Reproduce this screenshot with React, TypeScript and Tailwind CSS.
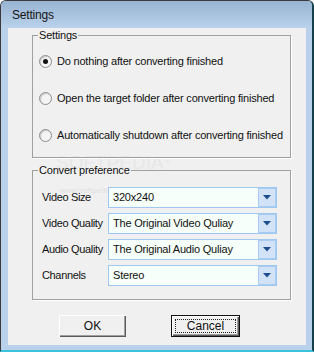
import React from "react";

const font = { fontFamily: '"Liberation Sans", Arial, sans-serif' };

function Radio({ checked, label }: { checked?: boolean; label: string }) {
  return (
    <div className="flex items-center gap-[5px] h-[16px]">
      <div className="w-[13px] h-[13px] rounded-full border border-[#8d8d8d] bg-[#f4f4f4] shadow-[inset_1px_1px_1px_#c8c8c8] flex items-center justify-center">
        {checked && <div className="w-[5px] h-[5px] rounded-full bg-[#111]" />}
      </div>
      <span className="tracking-[-0.2px] text-[#111]">{label}</span>
    </div>
  );
}

function Select({ value }: { value: string }) {
  return (
    <div className="w-[169px] h-[21px] border border-[#9fc8f0] bg-[#f6fff9] flex">
      <div className="flex-1 pl-[4px] flex items-center tracking-[-0.2px] text-[#111]">{value}</div>
      <div className="w-[18px] h-full border border-[#a9ccf2] bg-[#d2e3f8] flex items-center justify-center">
        <svg width="8" height="5" viewBox="0 0 8 5">
          <polygon points="0,0 8,0 4,4.5" fill="#1d4d8c" />
        </svg>
      </div>
    </div>
  );
}

function Row({ label, value }: { label: string; value: string }) {
  return (
    <div className="flex items-center h-[21px]">
      <div className="w-[66px] tracking-[-0.35px] text-[#111] whitespace-nowrap">{label}</div>
      <Select value={value} />
    </div>
  );
}

export default function App() {
  return (
    <div
      style={font}
      className="w-[314px] h-[352px] flex flex-col bg-[#b9d1ea] border-t border-l border-[#3a3a3a] border-r-2 border-r-[#16404c] border-b-2 border-b-[#3cc3dc] rounded-tl-[6px] rounded-tr-[6px] overflow-hidden"
    >
      <div className="h-[27px] shrink-0 bg-gradient-to-b from-[#98b4d3] to-[#bad2eb] flex items-center pl-[11px] pt-[1px] text-[12px] text-[#141414] tracking-[-0.2px]">
        Settings
      </div>
      <div className="pl-[7px]">
        <div className="relative w-[298px] h-[317px] bg-[#f0f0f0] text-[11px] leading-[13px] pt-[1px]">
          <div className="absolute left-[48px] top-[124px] text-[19px] leading-[22px] text-[#e7e7e7] pointer-events-none select-none whitespace-nowrap">
            SOFTPEDIA<span className="text-[7px] align-top">™</span>
          </div>
          <div className="absolute left-[52px] top-[158px] text-[8px] leading-[9px] text-[#e0e0e0] pointer-events-none select-none">
            www.softpedia.com
          </div>
          <fieldset className="relative ml-[24px] w-[259px] h-[129px] border border-[#a0a0a0] shadow-[1px_1px_0_#fff] px-0">
            <legend className="ml-[5px] px-[1px] leading-[13px] tracking-[-0.2px] text-[#111]">Settings</legend>
            <div className="flex flex-col gap-[21px] pt-[11px] pl-[6px]">
              <Radio checked label="Do nothing after converting finished" />
              <Radio label="Open the target folder after converting finished" />
              <Radio label="Automatically shutdown after converting finished" />
            </div>
          </fieldset>
          <fieldset className="relative mt-[6px] ml-[24px] w-[259px] h-[136px] border border-[#a0a0a0] shadow-[1px_1px_0_#fff] px-0">
            <legend className="ml-[5px] px-[1px] leading-[13px] tracking-[-0.2px] text-[#111]">Convert preference</legend>
            <div className="flex flex-col gap-[5px] pt-[10px] pl-[9px]">
              <Row label="Video Size" value="320x240" />
              <Row label="Video Quality" value="The Original Video Quliay" />
              <Row label="Audio Quality" value="The Original Audio Quliay" />
              <Row label="Channels" value="Stereo" />
            </div>
          </fieldset>
          <div className="flex items-center gap-[45px] pl-[51px] mt-[15px]">
            <div className="w-[67px] h-[22px] bg-[#f0f0f0] shadow-[inset_1px_1px_0_#fff,inset_-1px_-1px_0_#5a5a5a,inset_-2px_-2px_0_#a0a0a0] flex items-center justify-center text-[12px] text-[#111]">
              OK
            </div>
            <div className="w-[69px] h-[22px] border border-[#111] bg-[#f0f0f0] shadow-[inset_1px_1px_0_#fff,inset_-1px_-1px_0_#5a5a5a,inset_-2px_-2px_0_#a0a0a0] p-[3px]">
              <div className="w-full h-full border border-dotted border-[#222] flex items-center justify-center text-[12px] text-[#111]">
                Cancel
              </div>
            </div>
          </div>
        </div>
      </div>
    </div>
  );
}
